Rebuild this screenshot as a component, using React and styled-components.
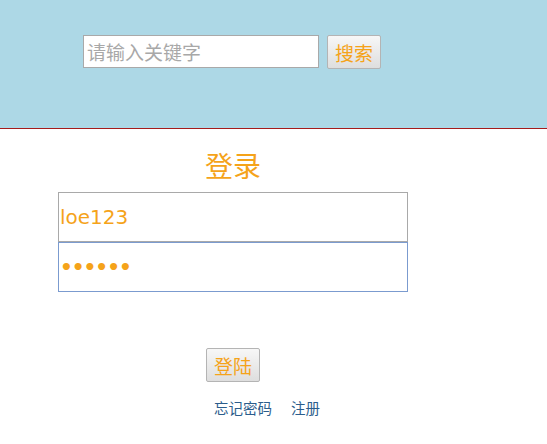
import React from 'react';
import styled, { createGlobalStyle } from 'styled-components';

const GlobalStyle = createGlobalStyle`
  body {
    margin: 0;
    background: #ffffff;
    font-family: 'DejaVu Sans', 'Noto Sans CJK SC', sans-serif;
  }
`;

const orange = '#f5a31a';

const Header = styled.header`
  background-color: #add8e6;
  border-bottom: 1px solid #a51c1c;
  padding: 35px 0 0 83px;
  height: 93px;
`;

const SearchForm = styled.form`
  display: flex;
  align-items: flex-start;
  gap: 8px;
`;

const SearchInput = styled.input`
  width: 236px;
  height: 33px;
  box-sizing: border-box;
  border: 1px solid #a9a9a9;
  padding: 0 3px;
  font-family: 'Noto Sans CJK SC', sans-serif;
  font-size: 19px;
  color: #333;
  outline: none;
  &::placeholder {
    color: #a8a8a8;
  }
`;

const GrayButton = styled.button`
  height: 34px;
  padding: 0 7px;
  border: 1px solid #b4b4b4;
  border-radius: 2px;
  background: linear-gradient(#f7f7f7, #dedede);
  color: ${orange};
  font-family: 'Noto Sans CJK SC', sans-serif;
  font-size: 19px;
  line-height: 1;
  cursor: pointer;
`;

const LoginBox = styled.div`
  width: 350px;
  margin-left: 58px;
  display: flex;
  flex-direction: column;
`;

const Title = styled.h2`
  margin: 18px 0 9px;
  font-family: 'Noto Sans CJK SC', sans-serif;
  font-weight: 400;
  font-size: 28px;
  line-height: 36px;
  color: ${orange};
  text-align: center;
`;

const Field = styled.input`
  width: 350px;
  height: 50px;
  box-sizing: border-box;
  margin: 0;
  padding: 0 1px;
  border: 1px solid ${p => (p.$active ? '#7b9bcf' : '#a9a9a9')};
  font-family: 'DejaVu Sans', sans-serif;
  font-size: 20px;
  font-weight: ${p => (p.type === 'password' ? 700 : 400)};
  letter-spacing: ${p => (p.type === 'password' ? '-1px' : '0')};
  color: ${orange};
  caret-color: ${orange};
  outline: none;
  background: #fff;
`;

const ButtonRow = styled.div`
  display: flex;
  justify-content: center;
  margin-top: 56px;
`;

const Links = styled.div`
  display: flex;
  gap: 19px;
  padding-left: 156px;
  margin-top: 16px;
`;

const TextLink = styled.a`
  font-family: 'Noto Sans CJK SC', sans-serif;
  font-size: 14.5px;
  line-height: 20px;
  color: #2b5d8c;
  text-decoration: none;
`;

export default function App() {
  return (
    <>
      <GlobalStyle />
      <Header>
        <SearchForm onSubmit={e => e.preventDefault()}>
          <SearchInput placeholder="请输入关键字" />
          <GrayButton type="submit">搜索</GrayButton>
        </SearchForm>
      </Header>
      <LoginBox>
        <Title>登录</Title>
        <Field type="text" defaultValue="loe123" />
        <Field type="password" defaultValue="123456" $active autoFocus />
        <ButtonRow>
          <GrayButton>登陆</GrayButton>
        </ButtonRow>
        <Links>
          <TextLink href="#">忘记密码</TextLink>
          <TextLink href="#">注册</TextLink>
        </Links>
      </LoginBox>
    </>
  );
}
